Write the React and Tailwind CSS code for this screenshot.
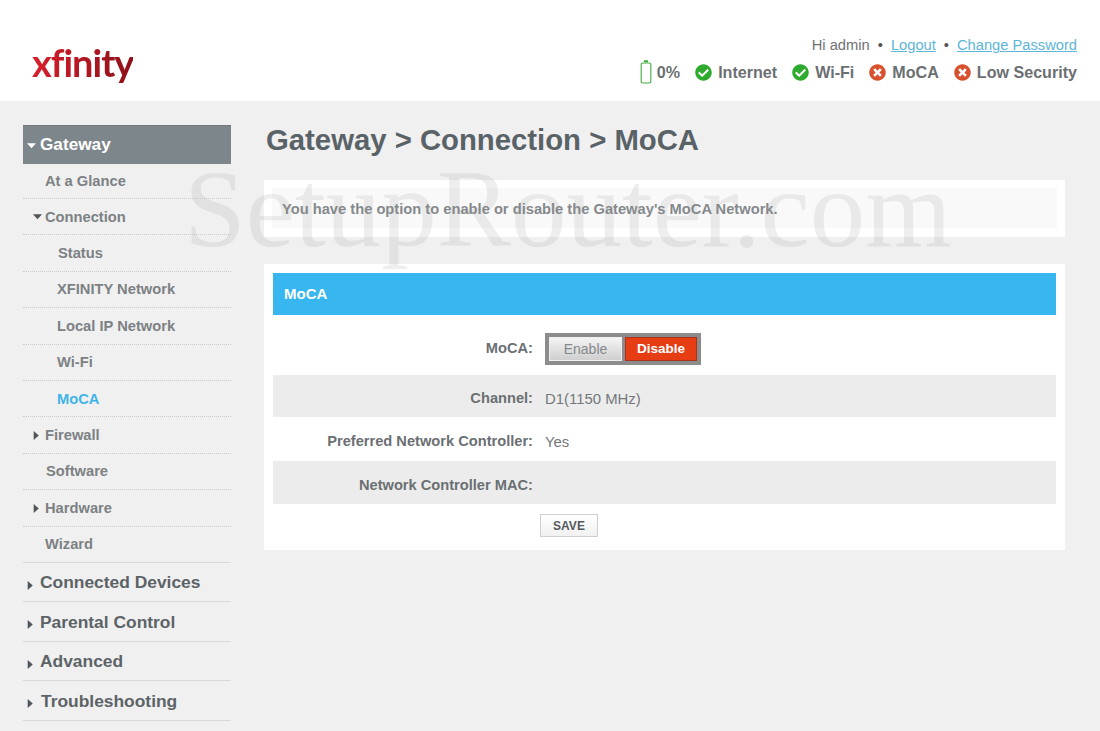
import { FaCheckCircle, FaTimesCircle } from "react-icons/fa";

const arial = "font-['Liberation_Sans',Arial,sans-serif]";

// sidebar rows under Gateway: pl is the text start, arrow is the little triangle
const subItems = [
  { label: "At a Glance", pl: "pl-[22px]", h: "h-[35px]" },
  { label: "Connection", pl: "pl-[22px]", arrow: "down" },
  { label: "Status", pl: "pl-[35px]" },
  { label: "XFINITY Network", pl: "pl-[34px]" },
  { label: "Local IP Network", pl: "pl-[34px]" },
  { label: "Wi-Fi", pl: "pl-[34px]" },
  { label: "MoCA", pl: "pl-[34px]", active: true },
  { label: "Firewall", pl: "pl-[22px]", arrow: "right" },
  { label: "Software", pl: "pl-[23px]" },
  { label: "Hardware", pl: "pl-[22px]", arrow: "right" },
  { label: "Wizard", pl: "pl-[22px]", last: true },
];

const sections = ["Connected Devices", "Parental Control", "Advanced", "Troubleshooting"];

const Arrow = ({ dir, className }) => (
  <svg viewBox="0 0 8 8" className={`absolute w-[9px] h-[9px] ${className}`} fill="currentColor">
    {dir === "down" ? <path d="M0 2h8L4 6.5z" /> : <path d="M1.5 0 6 4 1.5 8z" />}
  </svg>
);

const Sidebar = () => (
  <div className="w-[208px] ml-[23px] mt-6 shrink-0">
    <div className="relative h-[39px] bg-[#7d868b] border-t border-[#6d767b] text-white font-bold text-[17.2px] flex items-center pl-[17px]">
      <Arrow dir="down" className="left-[4px] top-[15px] text-white" />
      Gateway
    </div>
    {subItems.map((item) => (
      <div
        key={item.label}
        className={`relative flex items-center ${item.h || "h-[36.4px]"} ${item.pl} text-[14.7px] font-bold ${
          item.active ? "text-[#3fb4e8]" : "text-[#7c8184]"
        } ${item.last ? "border-b border-[#d8d8d8]" : "border-b border-dotted border-[#cccccc]"}`}
      >
        {item.arrow && (
          <Arrow
            dir={item.arrow}
            className={item.arrow === "down" ? "left-[10px] top-[13px] text-[#4f5558]" : "left-[9px] top-[14px] text-[#4f5558]"}
          />
        )}
        {item.label}
      </div>
    ))}
    {sections.map((s) => (
      <div
        key={s}
        className={`relative flex items-center h-[39.5px] border-b border-[#d8d8d8] text-[17.4px] font-bold text-[#5c6367] ${
          s === "Troubleshooting" ? "pl-[18px]" : "pl-[17px]"
        }`}
      >
        <Arrow dir="right" className="left-[3px] top-[18px] text-[#4f5558]" />
        {s}
      </div>
    ))}
  </div>
);

const Status = ({ ok, label }) => (
  <span className="flex items-center gap-[6px]">
    {ok ? (
      <FaCheckCircle className="text-[#2eaa2e] w-[17px] h-[17px]" />
    ) : (
      <FaTimesCircle className="text-[#d9502c] w-[17px] h-[17px]" />
    )}
    {label}
  </span>
);

const Header = () => (
  <div className="h-[101px] bg-white flex justify-between pl-[32px] pr-[23px]">
    <div className="mt-[36px] text-[38px] leading-[52px] tracking-[-1px] font-['Lato',sans-serif] font-bold text-transparent bg-clip-text bg-gradient-to-r from-[#d8202c] to-[#8f0f18] h-[56px]">
      xfinity
    </div>
    <div className="flex flex-col items-end pt-[35px]">
      <div className="flex items-center h-[20px] text-[14.7px] text-[#6f7376]">
        Hi admin
        <span className="mx-[8px] text-[#555]">•</span>
        <span className="text-[#5db5d8] underline">Logout</span>
        <span className="mx-[8px] text-[#555]">•</span>
        <span className="text-[#5db5d8] underline">Change Password</span>
      </div>
      <div className="flex items-center gap-[15px] mt-[5px] h-[24px] text-[16.1px] font-bold text-[#6b6f72]">
        <span className="flex items-center gap-[5px]">
          <svg viewBox="0 0 12 24" className="w-[12px] h-[24px]" fill="none" stroke="#3fae3f" strokeWidth="1.1">
            <rect x="1.2" y="3" width="9.6" height="20" rx="1.5" />
            <path d="M4 1.2h4" strokeWidth="2" />
          </svg>
          0%
        </span>
        <Status ok label="Internet" />
        <Status ok label="Wi-Fi" />
        <Status label="MoCA" />
        <Status label="Low Security" />
      </div>
    </div>
  </div>
);

const Row = ({ label, gray, h, children }) => (
  <div className={`flex items-center ${h} ${gray ? "bg-[#ececec]" : ""}`}>
    <div className="w-[260px] text-right text-[14.65px] font-bold text-[#6b7073]">{label}</div>
    <div className="pl-[12px] text-[14.9px] text-[#74787b]">{children}</div>
  </div>
);

export default function App() {
  return (
    <div className={`relative w-[1100px] h-[731px] overflow-hidden bg-[#f0f0f0] ${arial}`}>
      <Header />
      <div className="flex">
        <Sidebar />
        <div className="ml-[33px] w-[801px]">
          <h1 className="mt-[20px] pl-[2px] h-[38px] text-[29.3px] leading-[38px] font-bold text-[#596267]">
            Gateway &gt; Connection &gt; MoCA
          </h1>
          <div className="mt-[21px] bg-white p-[8px] h-[57px]">
            <div className="h-[40px] bg-[#f9f9f9] flex items-center pl-[10px] pt-[3px] text-[14.7px] font-bold text-[#85898c]">
              You have the option to enable or disable the Gateway's MoCA Network.
            </div>
          </div>
          <div className="mt-[27px] bg-white h-[286px] px-[9px] pt-[9px]">
            <div className="h-[42px] bg-[#38b6ef] flex items-center pl-[11px] text-[15px] font-bold text-white">MoCA</div>
            <Row label="MoCA:" h="h-[60px] pt-[8px]">
              <div className="flex w-[156px] h-[32px] bg-[#8c8c8c] p-[4px] gap-[3px] text-[14px]">
                <div className="flex-1 flex items-center justify-center bg-gradient-to-b from-[#f4f4f4] to-[#cfcfcf] border border-[#eeeeee] text-[#85898c]">
                  Enable
                </div>
                <div className="w-[72px] flex items-center justify-center bg-[#e63d14] border border-[#a9321a] text-white font-bold text-[13.5px]">
                  Disable
                </div>
              </div>
            </Row>
            <Row label="Channel:" gray h="h-[42px] pt-[6px]">D1(1150 MHz)</Row>
            <Row label="Preferred Network Controller:" h="h-[44px] pt-[6px]">Yes</Row>
            <Row label="Network Controller MAC:" gray h="h-[43px] pt-[6px]" />
            <div className="flex pl-[267px] pt-[10px]">
              <div className="w-[58px] h-[23px] flex items-center justify-center border border-[#cfcfcf] bg-gradient-to-b from-white to-[#f1f1f1] text-[12px] font-bold text-[#55595c]">
                SAVE
              </div>
            </div>
          </div>
        </div>
      </div>
      {/* site watermark over the page */}
      <div className="absolute left-[184px] top-[149px] text-[111px] leading-[120px] whitespace-nowrap font-['Liberation_Serif',serif] text-[#8c8c8c]/15 pointer-events-none">
        SetupRouter.com
      </div>
    </div>
  );
}
